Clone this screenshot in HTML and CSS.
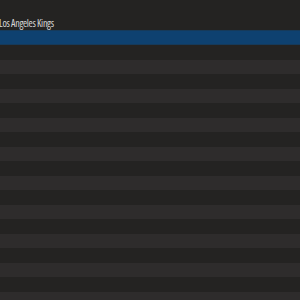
FILE: index.html
```html
<!DOCTYPE html>
<html lang="en">
<head>
  <meta charset="UTF-8">
  <title>Teams</title>
  <link rel="stylesheet" href="styles.css">
</head>
<body>
  <div class="list">
    <div class="list-head">Los Angeles Kings</div>
    <div class="row selected"></div>
    <div class="row"></div>
    <div class="row alt"></div>
    <div class="row"></div>
    <div class="row alt"></div>
    <div class="row"></div>
    <div class="row alt"></div>
    <div class="row"></div>
    <div class="row alt"></div>
    <div class="row"></div>
    <div class="row alt"></div>
    <div class="row"></div>
    <div class="row alt"></div>
    <div class="row"></div>
    <div class="row alt"></div>
    <div class="row"></div>
    <div class="row alt"></div>
    <div class="row"></div>
    <div class="row alt"></div>
  </div>
</body>
</html>
```

FILE: styles.css
```css
body {
  margin: 0;
  background-color: #242322;
  font-family: "Open Sans", sans-serif;
  overflow: hidden;
}

.list {
  width: 300px;
  height: 300px;
  overflow: hidden;
}

.list-head {
  height: 30px;
  box-sizing: border-box;
  padding-top: 17px;
  margin-left: -1px;
  font-size: 10px;
  line-height: 13px;
  color: #d8d8d8;
  letter-spacing: -0.3px;
  font-stretch: condensed;
}

.row {
  height: 14.5px;
  background-color: #242322;
}

.row.alt {
  background-color: #2e2c2c;
}

.row.selected {
  height: 15px;
  background-color: #0e4170;
  border-top: 1px solid #163a5a;
  border-bottom: 1px solid #163a5a;
  box-sizing: border-box;
}
```
